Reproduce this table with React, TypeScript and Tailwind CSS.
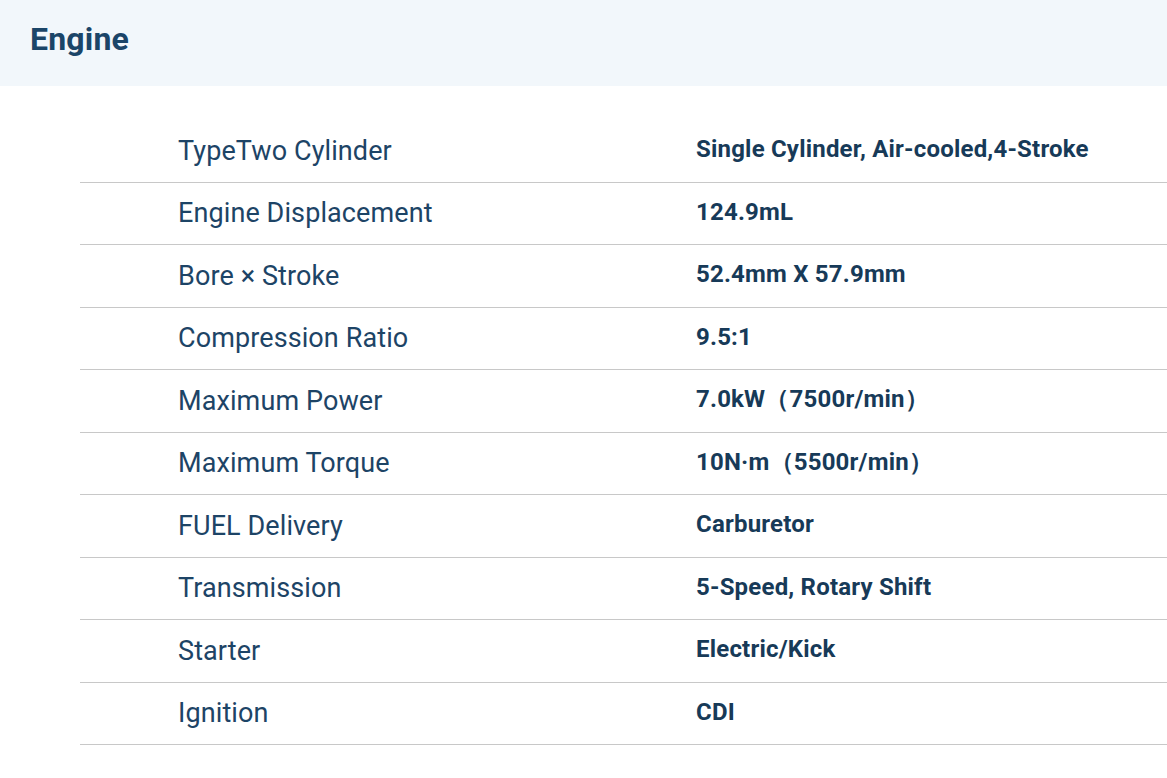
const specs: [string, string][] = [
  ["TypeTwo Cylinder", "Single Cylinder, Air-cooled,4-Stroke"],
  ["Engine Displacement", "124.9mL"],
  ["Bore × Stroke", "52.4mm X 57.9mm"],
  ["Compression Ratio", "9.5:1"],
  ["Maximum Power", "7.0kW（7500r/min）"],
  ["Maximum Torque", "10N·m（5500r/min）"],
  ["FUEL Delivery", "Carburetor"],
  ["Transmission", "5-Speed, Rotary Shift"],
  ["Starter", "Electric/Kick"],
  ["Ignition", "CDI"],
];

export default function App() {
  return (
    <div className="w-[1167px] h-[778px] bg-white overflow-hidden">
      {/* Section header */}
      <div className="h-[86px] bg-[#f2f7fb] flex items-center pl-[30px] pb-[8px]">
        <h2 className="text-[32px] font-bold text-[#1b4568] font-['Roboto',sans-serif] tracking-[0.2px]">
          Engine
        </h2>
      </div>

      {/* Spec table */}
      <div className="ml-[80px] mt-[34px]">
        {specs.map(([label, value]) => (
          <div
            key={label}
            className="grid grid-cols-[616px_1fr] items-center h-[62.5px] border-b border-[#c8c8c8]"
          >
            <div className="pl-[98px] text-[27px] text-[#1d4466] font-['Roboto',sans-serif] tracking-[0.1px]">
              {label}
            </div>
            <div className="pb-[3px] text-[24px] font-bold text-[#173a58] font-['Roboto',sans-serif] tracking-[0.2px]">
              {value}
            </div>
          </div>
        ))}
      </div>
    </div>
  );
}
